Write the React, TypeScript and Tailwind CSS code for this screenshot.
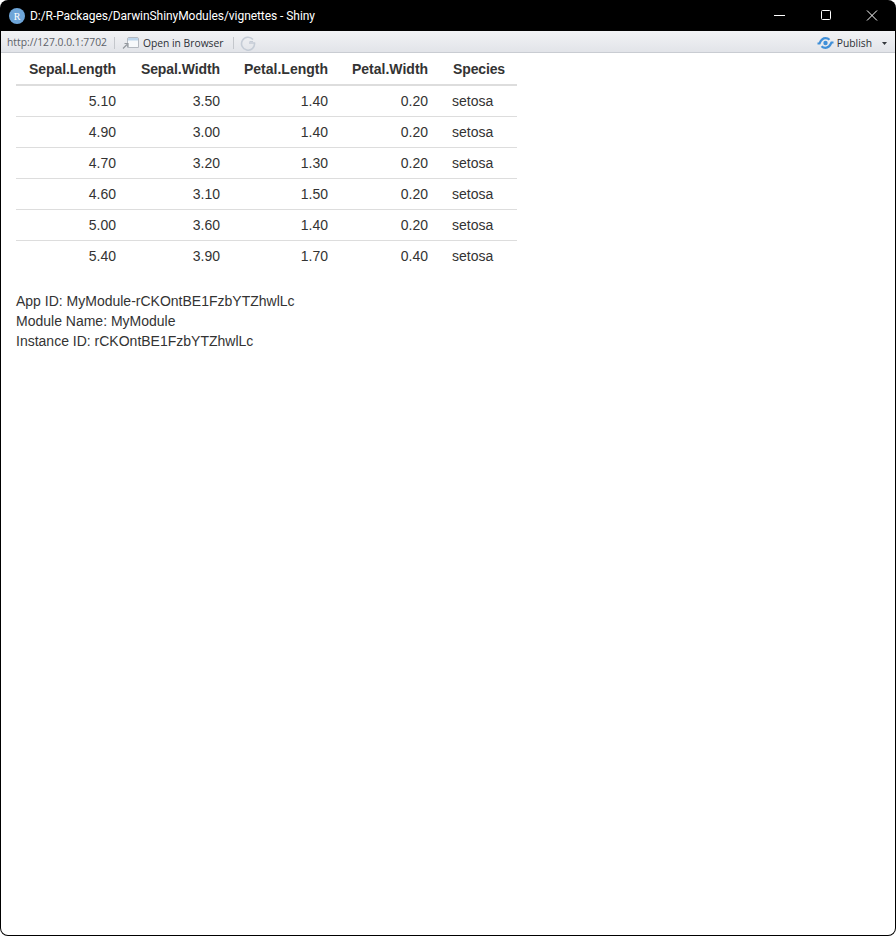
const rows = [
  ["5.10", "3.50", "1.40", "0.20"],
  ["4.90", "3.00", "1.40", "0.20"],
  ["4.70", "3.20", "1.30", "0.20"],
  ["4.60", "3.10", "1.50", "0.20"],
  ["5.00", "3.60", "1.40", "0.20"],
  ["5.40", "3.90", "1.70", "0.40"],
];
const heads = [
  { t: "Sepal.Length", c: "w-[112px] tracking-[-0.08px]" },
  { t: "Sepal.Width", c: "w-[104px] tracking-[-0.08px]" },
  { t: "Petal.Length", c: "w-[108px]" },
  { t: "Petal.Width", c: "w-[100px]" },
];

export default function App() {
  return (
    <div className="w-[896px] h-[936px] bg-white overflow-hidden font-['Liberation_Sans',Arial,sans-serif]">
      <div className="w-full h-full flex flex-col rounded-[8px] bg-black overflow-hidden">
        <div className="h-[31px] flex items-center text-white shrink-0">
          <svg width="16" height="16" viewBox="0 0 16 16" className="ml-[9px] mr-[5px]">
            <circle cx="8" cy="8" r="8" fill="#6ea5d8" />
            <text x="8" y="11.5" textAnchor="middle" fontSize="10" fill="#fff" fontFamily="Liberation Serif">R</text>
          </svg>
          <span className="text-[12px] tracking-[-0.06px] font-['Roboto',sans-serif]">D:/R-Packages/DarwinShinyModules/vignettes - Shiny</span>
          <div className="ml-auto flex items-center mr-[1px]">
            <svg width="46" height="31" viewBox="0 0 46 31"><path d="M17 15.5h11" stroke="#fff" /></svg>
            <svg width="46" height="31" viewBox="0 0 46 31"><rect x="18.5" y="10.5" width="9" height="9" rx="1" fill="none" stroke="#fff" /></svg>
            <svg width="46" height="31" viewBox="0 0 46 31"><path d="M18 10.5l10 10M28 10.5l-10 10" stroke="#fff" /></svg>
          </div>
        </div>
        <div className="flex-1 mx-[1px] mb-[1px] rounded-b-[7px] bg-white overflow-hidden flex flex-col">
          <div className="h-[22px] shrink-0 pt-[3px] flex items-center border-b border-[#c9ccd2] bg-gradient-to-b from-[#f2f3f5] to-[#e2e4e9] text-[10.3px] font-['Open_Sans',sans-serif]">
            <span className="ml-[6px] text-[#5c6168]">http://127.0.0.1:7702</span>
            <div className="w-px h-[12px] bg-[#c4c7cc] ml-[7px]" />
            <svg width="17" height="14" viewBox="0 0 17 14" className="ml-[7px]">
              <path d="M5.5 3 Q5.5 1.5 7 1.5H15Q16.5 1.5 16.5 3V11.5H5.5Z" fill="#f7f9fb" stroke="#b4b9c0" />
              <rect x="6" y="2" width="10" height="2.5" fill="#bcd5ec" />
              <path d="M1 12.5l4-4M2.5 7.5H6V11" stroke="#93989e" strokeWidth="1.2" fill="none" />
            </svg>
            <span className="ml-[4px] mt-[2px] text-[#2c3036]">Open in Browser</span>
            <div className="w-px h-[12px] bg-[#c4c7cc] ml-[9px]" />
            <svg width="16" height="16" viewBox="0 0 16 16" className="ml-[6px]">
              <path d="M13 4.5A6.5 6.5 0 1 0 14.5 8H9" fill="none" stroke="#c5ccd6" strokeWidth="1.6" />
              <path d="M9.5 6.5h3.5" stroke="#c5ccd6" />
            </svg>
            <svg width="17" height="12" viewBox="0 0 17 12" className="ml-auto">
              <path d="M0.5 6.5H2.5C4 3 6 1.2 8.5 1.2C10 1.2 11.5 1.8 12.5 2.8" fill="none" stroke="#3f8fd8" strokeWidth="2.2" />
              <path d="M16.5 5.5H14.5C13 9 11 10.8 8.5 10.8C7 10.8 5.5 10.2 4.5 9.2" fill="none" stroke="#3f8fd8" strokeWidth="2.2" />
              <circle cx="8.5" cy="6" r="2.2" fill="#3f8fd8" />
            </svg>
            <span className="ml-[3px] mt-[2px] text-[#2c3036]">Publish</span>
            <svg width="5" height="3" viewBox="0 0 5 3" className="ml-[10px] mr-[8px]"><path d="M0 0h5L2.5 3z" fill="#33373c" /></svg>
          </div>
          <div className="px-[15px] text-[14px] leading-[20px] text-[#333333]">
            <table className="border-collapse table-fixed w-[501px]">
              <thead>
                <tr className="border-b-2 border-[#dddddd]">
                  {heads.map((h) => (
                    <th key={h.t} className={`px-3 pt-[6px] pb-[5px] text-right font-bold ${h.c}`}>{h.t}</th>
                  ))}
                  <th className="w-[77px] px-3 pt-[6px] pb-[5px] text-right font-bold tracking-[-0.14px]">Species</th>
                </tr>
              </thead>
              <tbody>
                {rows.map((r, i) => (
                  <tr key={i} className={i ? "border-t border-[#dddddd]" : ""}>
                    {r.map((c, j) => (
                      <td key={j} className="px-3 py-[5px] text-right">{c}</td>
                    ))}
                    <td className="px-3 py-[5px] text-left">setosa</td>
                  </tr>
                ))}
              </tbody>
            </table>
            <div className="mt-[20px]">
              <div>App ID: MyModule-rCKOntBE1FzbYTZhwlLc</div>
              <div>Module Name: MyModule</div>
              <div>Instance ID: rCKOntBE1FzbYTZhwlLc</div>
            </div>
          </div>
        </div>
      </div>
    </div>
  );
}
